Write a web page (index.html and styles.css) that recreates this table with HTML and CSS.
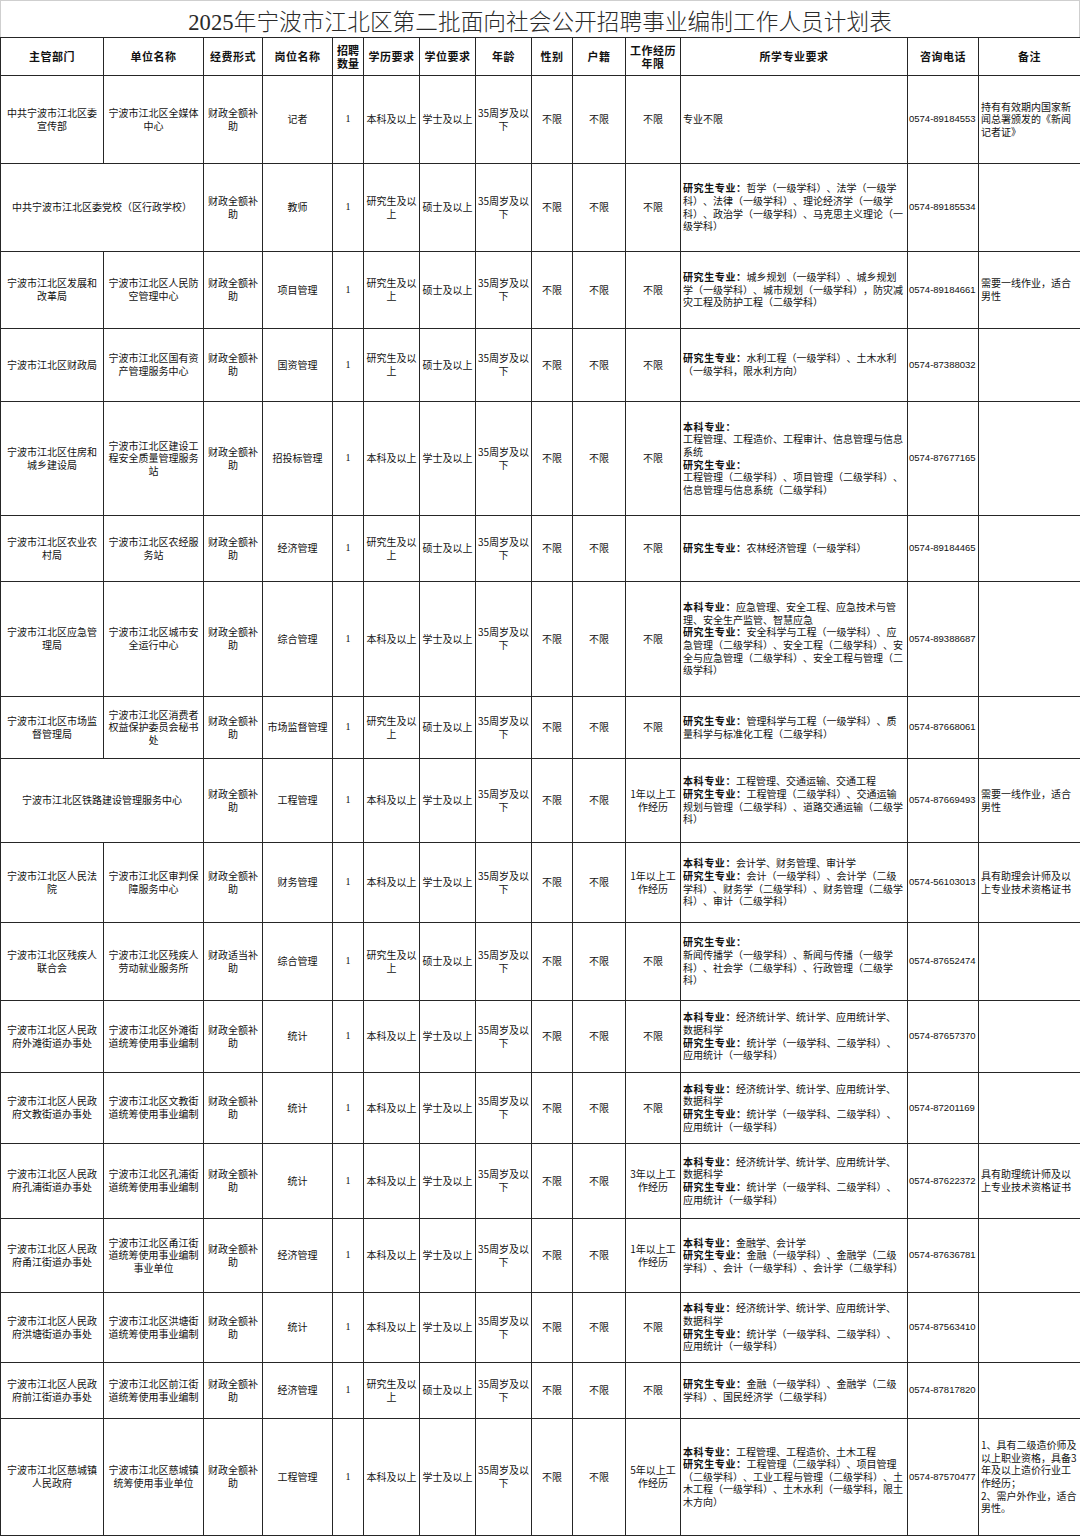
FILE: index.html
```html
<!DOCTYPE html>
<html lang="zh-CN">
<head>
<meta charset="utf-8">
<title>2025年宁波市江北区第二批面向社会公开招聘事业编制工作人员计划表</title>
<link rel="stylesheet" href="styles.css">
</head>
<body>
<div class="title">2025年宁波市江北区第二批面向社会公开招聘事业编制工作人员计划表</div>
<table class="plan">
<colgroup>
<col class="c1"><col class="c2"><col class="c3"><col class="c4"><col class="c5"><col class="c6"><col class="c7"><col class="c8"><col class="c9"><col class="c10"><col class="c11"><col class="c12"><col class="c13"><col class="c14">
</colgroup>
<thead>
<tr>
<th>主管部门</th><th>单位名称</th><th>经费形式</th><th>岗位名称</th><th class="nop">招聘数量</th><th>学历要求</th><th>学位要求</th><th>年龄</th><th>性别</th><th>户籍</th><th>工作经历年限</th><th>所学专业要求</th><th>咨询电话</th><th>备注</th>
</tr>
</thead>
<tbody>
<tr>
<td>中共宁波市江北区委宣传部</td><td>宁波市江北区全媒体中心</td><td>财政全额补助</td><td>记者</td><td class="num">1</td><td>本科及以上</td><td>学士及以上</td><td class="ag">35周岁及以下</td><td>不限</td><td>不限</td><td>不限</td>
<td class="mj">专业不限</td><td class="ph">0574-89184553</td><td class="bz">持有有效期内国家新闻总署颁发的《新闻记者证》</td>
</tr>
<tr>
<td colspan="2">中共宁波市江北区委党校（区行政学校）</td><td>财政全额补助</td><td>教师</td><td class="num">1</td><td>研究生及以上</td><td>硕士及以上</td><td class="ag">35周岁及以下</td><td>不限</td><td>不限</td><td>不限</td>
<td class="mj"><b class="lb">研究生专业：</b>哲学（一级学科）、法学（一级学<br>科）、法律（一级学科）、理论经济学（一级学<br>科）、政治学（一级学科）、马克思主义理论（一<br>级学科）</td><td class="ph">0574-89185534</td><td class="bz"></td>
</tr>
<tr>
<td>宁波市江北区发展和改革局</td><td>宁波市江北区人民防空管理中心</td><td>财政全额补助</td><td>项目管理</td><td class="num">1</td><td>研究生及以上</td><td>硕士及以上</td><td class="ag">35周岁及以下</td><td>不限</td><td>不限</td><td>不限</td>
<td class="mj"><b class="lb">研究生专业：</b>城乡规划（一级学科）、城乡规划<br>学（一级学科）、城市规划（一级学科），防灾减<br>灾工程及防护工程（二级学科）</td><td class="ph">0574-89184661</td><td class="bz">需要一线作业，适合男性</td>
</tr>
<tr>
<td>宁波市江北区财政局</td><td>宁波市江北区国有资产管理服务中心</td><td>财政全额补助</td><td>国资管理</td><td class="num">1</td><td>研究生及以上</td><td>硕士及以上</td><td class="ag">35周岁及以下</td><td>不限</td><td>不限</td><td>不限</td>
<td class="mj"><b class="lb">研究生专业：</b>水利工程（一级学科）、土木水利<br>（一级学科，限水利方向）</td><td class="ph">0574-87388032</td><td class="bz"></td>
</tr>
<tr>
<td>宁波市江北区住房和城乡建设局</td><td>宁波市江北区建设工程安全质量管理服务站</td><td>财政全额补助</td><td>招投标管理</td><td class="num">1</td><td>本科及以上</td><td>学士及以上</td><td class="ag">35周岁及以下</td><td>不限</td><td>不限</td><td>不限</td>
<td class="mj"><b class="lb">本科专业：</b><br>工程管理、工程造价、工程审计、信息管理与信息<br>系统<br><b class="lb">研究生专业：</b><br>工程管理（二级学科）、项目管理（二级学科）、<br>信息管理与信息系统（二级学科）</td><td class="ph">0574-87677165</td><td class="bz"></td>
</tr>
<tr>
<td>宁波市江北区农业农村局</td><td>宁波市江北区农经服务站</td><td>财政全额补助</td><td>经济管理</td><td class="num">1</td><td>研究生及以上</td><td>硕士及以上</td><td class="ag">35周岁及以下</td><td>不限</td><td>不限</td><td>不限</td>
<td class="mj"><b class="lb">研究生专业：</b>农林经济管理（一级学科）</td><td class="ph">0574-89184465</td><td class="bz"></td>
</tr>
<tr>
<td>宁波市江北区应急管理局</td><td>宁波市江北区城市安全运行中心</td><td>财政全额补助</td><td>综合管理</td><td class="num">1</td><td>本科及以上</td><td>学士及以上</td><td class="ag">35周岁及以下</td><td>不限</td><td>不限</td><td>不限</td>
<td class="mj"><b class="lb">本科专业：</b>应急管理、安全工程、应急技术与管<br>理、安全生产监管、智慧应急<br><b class="lb">研究生专业：</b>安全科学与工程（一级学科）、应<br>急管理（二级学科）、安全工程（二级学科）、安<br>全与应急管理（二级学科）、安全工程与管理（二<br>级学科）</td><td class="ph">0574-89388687</td><td class="bz"></td>
</tr>
<tr>
<td>宁波市江北区市场监督管理局</td><td>宁波市江北区消费者权益保护委员会秘书处</td><td>财政全额补助</td><td>市场监督管理</td><td class="num">1</td><td>研究生及以上</td><td>硕士及以上</td><td class="ag">35周岁及以下</td><td>不限</td><td>不限</td><td>不限</td>
<td class="mj"><b class="lb">研究生专业：</b>管理科学与工程（一级学科）、质<br>量科学与标准化工程（二级学科）</td><td class="ph">0574-87668061</td><td class="bz"></td>
</tr>
<tr>
<td colspan="2">宁波市江北区铁路建设管理服务中心</td><td>财政全额补助</td><td>工程管理</td><td class="num">1</td><td>本科及以上</td><td>学士及以上</td><td class="ag">35周岁及以下</td><td>不限</td><td>不限</td><td>1年以上工作经历</td>
<td class="mj"><b class="lb">本科专业：</b>工程管理、交通运输、交通工程<br><b class="lb">研究生专业：</b>工程管理（二级学科）、交通运输<br>规划与管理（二级学科）、道路交通运输（二级学<br>科）</td><td class="ph">0574-87669493</td><td class="bz">需要一线作业，适合男性</td>
</tr>
<tr>
<td>宁波市江北区人民法院</td><td>宁波市江北区审判保障服务中心</td><td>财政全额补助</td><td>财务管理</td><td class="num">1</td><td>本科及以上</td><td>学士及以上</td><td class="ag">35周岁及以下</td><td>不限</td><td>不限</td><td>1年以上工作经历</td>
<td class="mj"><b class="lb">本科专业：</b>会计学、财务管理、审计学<br><b class="lb">研究生专业：</b>会计（一级学科）、会计学（二级<br>学科）、财务学（二级学科）、财务管理（二级学<br>科）、审计（二级学科）</td><td class="ph">0574-56103013</td><td class="bz">具有助理会计师及以上专业技术资格证书</td>
</tr>
<tr>
<td>宁波市江北区残疾人联合会</td><td>宁波市江北区残疾人劳动就业服务所</td><td>财政适当补助</td><td>综合管理</td><td class="num">1</td><td>研究生及以上</td><td>硕士及以上</td><td class="ag">35周岁及以下</td><td>不限</td><td>不限</td><td>不限</td>
<td class="mj"><b class="lb">研究生专业：</b><br>新闻传播学（一级学科）、新闻与传播（一级学<br>科）、社会学（二级学科）、行政管理（二级学<br>科）</td><td class="ph">0574-87652474</td><td class="bz"></td>
</tr>
<tr>
<td>宁波市江北区人民政府外滩街道办事处</td><td>宁波市江北区外滩街道统筹使用事业编制</td><td>财政全额补助</td><td>统计</td><td class="num">1</td><td>本科及以上</td><td>学士及以上</td><td class="ag">35周岁及以下</td><td>不限</td><td>不限</td><td>不限</td>
<td class="mj"><b class="lb">本科专业：</b>经济统计学、统计学、应用统计学、<br>数据科学<br><b class="lb">研究生专业：</b>统计学（一级学科、二级学科）、<br>应用统计（一级学科）</td><td class="ph">0574-87657370</td><td class="bz"></td>
</tr>
<tr>
<td>宁波市江北区人民政府文教街道办事处</td><td>宁波市江北区文教街道统筹使用事业编制</td><td>财政全额补助</td><td>统计</td><td class="num">1</td><td>本科及以上</td><td>学士及以上</td><td class="ag">35周岁及以下</td><td>不限</td><td>不限</td><td>不限</td>
<td class="mj"><b class="lb">本科专业：</b>经济统计学、统计学、应用统计学、<br>数据科学<br><b class="lb">研究生专业：</b>统计学（一级学科、二级学科）、<br>应用统计（一级学科）</td><td class="ph">0574-87201169</td><td class="bz"></td>
</tr>
<tr>
<td>宁波市江北区人民政府孔浦街道办事处</td><td>宁波市江北区孔浦街道统筹使用事业编制</td><td>财政全额补助</td><td>统计</td><td class="num">1</td><td>本科及以上</td><td>学士及以上</td><td class="ag">35周岁及以下</td><td>不限</td><td>不限</td><td>3年以上工作经历</td>
<td class="mj"><b class="lb">本科专业：</b>经济统计学、统计学、应用统计学、<br>数据科学<br><b class="lb">研究生专业：</b>统计学（一级学科、二级学科）、<br>应用统计（一级学科）</td><td class="ph">0574-87622372</td><td class="bz">具有助理统计师及以上专业技术资格证书</td>
</tr>
<tr>
<td>宁波市江北区人民政府甬江街道办事处</td><td>宁波市江北区甬江街道统筹使用事业编制事业单位</td><td>财政全额补助</td><td>经济管理</td><td class="num">1</td><td>本科及以上</td><td>学士及以上</td><td class="ag">35周岁及以下</td><td>不限</td><td>不限</td><td>1年以上工作经历</td>
<td class="mj"><b class="lb">本科专业：</b>金融学、会计学<br><b class="lb">研究生专业：</b>金融（一级学科）、金融学（二级<br>学科）、会计（一级学科）、会计学（二级学科）</td><td class="ph">0574-87636781</td><td class="bz"></td>
</tr>
<tr>
<td>宁波市江北区人民政府洪塘街道办事处</td><td>宁波市江北区洪塘街道统筹使用事业编制</td><td>财政全额补助</td><td>统计</td><td class="num">1</td><td>本科及以上</td><td>学士及以上</td><td class="ag">35周岁及以下</td><td>不限</td><td>不限</td><td>不限</td>
<td class="mj"><b class="lb">本科专业：</b>经济统计学、统计学、应用统计学、<br>数据科学<br><b class="lb">研究生专业：</b>统计学（一级学科、二级学科）、<br>应用统计（一级学科）</td><td class="ph">0574-87563410</td><td class="bz"></td>
</tr>
<tr>
<td>宁波市江北区人民政府前江街道办事处</td><td>宁波市江北区前江街道统筹使用事业编制</td><td>财政全额补助</td><td>经济管理</td><td class="num">1</td><td>研究生及以上</td><td>硕士及以上</td><td class="ag">35周岁及以下</td><td>不限</td><td>不限</td><td>不限</td>
<td class="mj"><b class="lb">研究生专业：</b>金融（一级学科）、金融学（二级<br>学科）、国民经济学（二级学科）</td><td class="ph">0574-87817820</td><td class="bz"></td>
</tr>
<tr>
<td>宁波市江北区慈城镇人民政府</td><td>宁波市江北区慈城镇统筹使用事业单位</td><td>财政全额补助</td><td>工程管理</td><td class="num">1</td><td>本科及以上</td><td>学士及以上</td><td class="ag">35周岁及以下</td><td>不限</td><td>不限</td><td>5年以上工作经历</td>
<td class="mj"><b class="lb">本科专业：</b>工程管理、工程造价、土木工程<br><b class="lb">研究生专业：</b>工程管理（二级学科）、项目管理<br>（二级学科）、工业工程与管理（二级学科）、土<br>木工程（一级学科）、土木水利（一级学科，限土<br>木方向）</td><td class="ph">0574-87570477</td><td class="bz">1、具有二级造价师及以上职业资格，具备3年及以上造价行业工作经历；<br>2、需户外作业，适合男性。</td>
</tr>
</tbody>
</table>
</body>
</html>
```
FILE: styles.css
```css
html, body {
  margin: 0;
  padding: 0;
  background: #ffffff;
}

body {
  font-family: "Noto Sans CJK SC", sans-serif;
  color: #111111;
  width: 1080px;
  text-spacing-trim: space-all;
}

.title {
  height: 37px;
  box-sizing: border-box;
  border: 1px solid #cfcfcf;
  border-bottom: none;
  padding-top: 2px;
  display: flex;
  align-items: center;
  justify-content: center;
  font-family: "Liberation Serif", "Noto Sans CJK SC", serif;
  font-size: 22.6px;
  font-weight: 300;
  letter-spacing: 0.1px;
  color: #2a2a2a;
}

.plan {
  border-collapse: collapse;
  table-layout: fixed;
  width: 1080px;
}

.c1 { width: 103px; }
.c2 { width: 100px; }
.c3 { width: 59px; }
.c4 { width: 70px; }
.c5 { width: 31px; }
.c6 { width: 56px; }
.c7 { width: 56px; }
.c8 { width: 56px; }
.c9 { width: 41px; }
.c10 { width: 53px; }
.c11 { width: 55px; }
.c12 { width: 227px; }
.c13 { width: 71px; }
.c14 { width: 102px; }

.plan th,
.plan td {
  border: 1px solid #262626;
  padding: 0 2px;
  text-align: center;
  vertical-align: middle;
  font-size: 10px;
  line-height: 12.6px;
  font-weight: normal;
  overflow: hidden;
}

.plan th {
  font-size: 11px;
  line-height: 13px;
  font-weight: bold;
  letter-spacing: 0.5px;
}

.plan th.nop {
  padding: 0;
  letter-spacing: 0;
}

.plan thead tr { height: 38px; }

.plan tbody tr:nth-child(1) { height: 88px; }
.plan tbody tr:nth-child(2) { height: 88px; }
.plan tbody tr:nth-child(3) { height: 77px; }
.plan tbody tr:nth-child(4) { height: 73px; }
.plan tbody tr:nth-child(5) { height: 114px; }
.plan tbody tr:nth-child(6) { height: 66px; }
.plan tbody tr:nth-child(7) { height: 115px; }
.plan tbody tr:nth-child(8) { height: 62px; }
.plan tbody tr:nth-child(9) { height: 84px; }
.plan tbody tr:nth-child(10) { height: 80px; }
.plan tbody tr:nth-child(11) { height: 78px; }
.plan tbody tr:nth-child(12) { height: 72px; }
.plan tbody tr:nth-child(13) { height: 71px; }
.plan tbody tr:nth-child(14) { height: 75px; }
.plan tbody tr:nth-child(15) { height: 74px; }
.plan tbody tr:nth-child(16) { height: 70px; }
.plan tbody tr:nth-child(17) { height: 56px; }
.plan tbody tr:nth-child(18) { height: 117px; }

.plan td.num {
  font-family: "Liberation Serif", serif;
  font-size: 10px;
  padding: 0;
}

.plan td.ag {
  padding: 0;
}

.plan td.mj {
  text-align: left;
  padding: 0 2px 0 2px;
  white-space: nowrap;
}

.lb {
  font-weight: bold;
  letter-spacing: 0.6px;
}

.plan td.ph {
  text-align: left;
  padding: 0 0 0 1px;
  white-space: nowrap;
  font-family: "Liberation Sans", sans-serif;
  font-size: 9.5px;
  letter-spacing: 0;
}

.plan td.bz {
  text-align: left;
  padding: 0 2px 0 2px;
}
```
